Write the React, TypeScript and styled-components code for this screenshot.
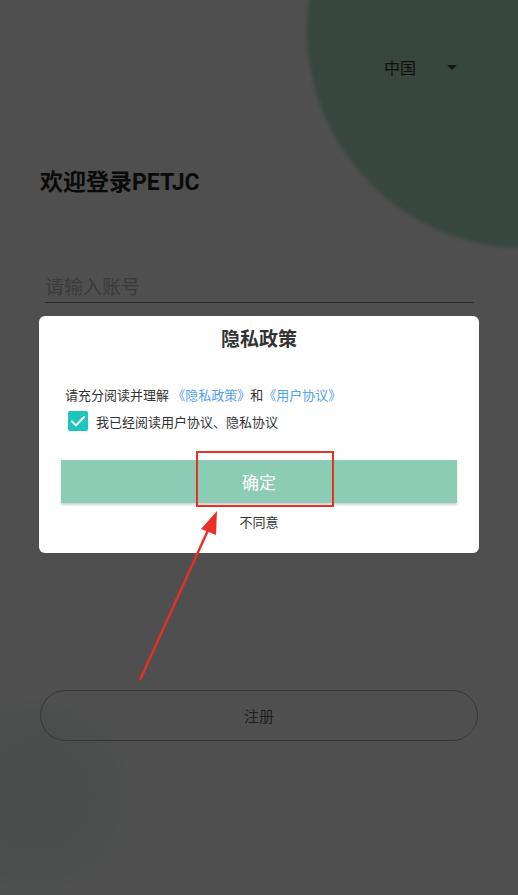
import * as React from "react";
import styled, { createGlobalStyle } from "styled-components";

const GlobalStyle = createGlobalStyle`
    html, body {
        margin: 0;
        padding: 0;
        background: #ffffff;
    }
    body {
        font-family: Roboto, "Noto Sans CJK SC", sans-serif;
    }
`;

const Screen = styled.div`
    position: relative;
    width: 518px;
    height: 895px;
    overflow: hidden;
    background: #ffffff;
`;

const TopBlob = styled.div`
    position: absolute;
    left: 307px;
    top: -188px;
    width: 436px;
    height: 436px;
    border-radius: 50%;
    background: #b1e2cb;
    filter: blur(2px);
`;

const BottomBlob = styled.div`
    position: absolute;
    left: -70px;
    top: 690px;
    width: 210px;
    height: 210px;
    border-radius: 50%;
    background: radial-gradient(circle, rgba(200, 235, 222, 0.35) 0%, rgba(200, 235, 222, 0.25) 50%, rgba(255, 255, 255, 0) 72%);
`;

const Content = styled.div`
    position: relative;
    display: flex;
    flex-direction: column;
    padding: 0 40px;
`;

const TopBar = styled.div`
    display: flex;
    justify-content: flex-end;
    padding: 53px 21px 0 0;
`;

const CountrySelect = styled.div`
    display: flex;
    align-items: center;
    gap: 31px;
    height: 28px;
    font-size: 16px;
    color: #333;
    font-family: "Noto Sans CJK SC", sans-serif;
`;

const Caret = styled.span`
    width: 0;
    height: 0;
    border-left: 5px solid transparent;
    border-right: 5px solid transparent;
    border-top: 5px solid #444;
`;

const Title = styled.h1`
    margin: 87px 0 0 0;
    font-size: 23px;
    line-height: 30px;
    font-weight: 700;
    color: #222;
`;

const AccountInput = styled.div`
    margin: 70px 4px 0 5px;
    height: 34px;
    display: flex;
    align-items: center;
    border-bottom: 1px solid #888;
    font-size: 19px;
    color: #bbbbbb;
    font-family: "Noto Sans CJK SC", sans-serif;
`;

const RegisterButton = styled.div`
    margin-top: 387px;
    height: 49px;
    border: 1px solid #aaaaaa;
    border-radius: 26px;
    display: flex;
    align-items: center;
    justify-content: center;
    font-size: 15px;
    color: #666;
`;

const Overlay = styled.div`
    position: absolute;
    inset: 0;
    background: rgba(0, 0, 0, 0.69);
    display: flex;
    justify-content: center;
    align-items: flex-start;
    padding-top: 316px;
`;

const Dialog = styled.div`
    position: relative;
    width: 440px;
    height: 237px;
    box-sizing: border-box;
    background: #ffffff;
    border-radius: 6px;
    display: flex;
    flex-direction: column;
    padding: 11px 22px 0 22px;
`;

const DialogTitle = styled.div`
    text-align: center;
    font-size: 19px;
    line-height: 26px;
    font-weight: 700;
    color: #333;
`;

const Body = styled.div`
    margin-top: 34px;
    padding-left: 4px;
    font-size: 13px;
    line-height: 18px;
    color: #333;
`;

const Link = styled.span`
    color: #52a2ea;
`;

const CheckRow = styled.div`
    display: flex;
    align-items: center;
    gap: 8px;
    margin: 6px 0 0 7px;
    font-size: 13px;
    color: #333;
`;

const CheckBox = styled.span`
    width: 20px;
    height: 20px;
    border-radius: 2px;
    background: #1ec5bd;
    display: flex;
    align-items: center;
    justify-content: center;
`;

const ConfirmButton = styled.div`
    margin-top: 29px;
    height: 43px;
    background: #8ccbb4;
    box-shadow: 0 2px 2px rgba(0, 0, 0, 0.18);
    display: flex;
    align-items: center;
    justify-content: center;
    font-size: 17px;
    color: #ffffff;
`;

const Decline = styled.div`
    margin-top: 11px;
    text-align: center;
    font-size: 13px;
    line-height: 18px;
    color: #333;
`;

const Highlight = styled.div`
    position: absolute;
    left: 157px;
    top: 135px;
    width: 134px;
    height: 52px;
    border: 2px solid #ea2f26;
`;

const Annotation = styled.svg`
    position: absolute;
    left: 0;
    top: 0;
    pointer-events: none;
`;

export default function App() {
    return <>
        <GlobalStyle/>
        <Screen>
            <TopBlob/>
            <BottomBlob/>
            <Content>
                <TopBar>
                    <CountrySelect>
                        <span>中国</span>
                        <Caret/>
                    </CountrySelect>
                </TopBar>
                <Title>欢迎登录PETJC</Title>
                <AccountInput>请输入账号</AccountInput>
                <RegisterButton>注册</RegisterButton>
            </Content>
            <Overlay>
                <Dialog>
                    <DialogTitle>隐私政策</DialogTitle>
                    <Body>
                        请充分阅读并理解 <Link>《隐私政策》</Link>和<Link>《用户协议》</Link>
                    </Body>
                    <CheckRow>
                        <CheckBox>
                            <svg width="16" height="16" viewBox="0 0 24 24" fill="none" stroke="#fff" strokeWidth="3" strokeLinecap="round" strokeLinejoin="round">
                                <path d="M3 12.5l6 6L21 6"/>
                            </svg>
                        </CheckBox>
                        <span>我已经阅读用户协议、隐私协议</span>
                    </CheckRow>
                    <ConfirmButton>确定</ConfirmButton>
                    <Decline>不同意</Decline>
                    <Highlight/>
                </Dialog>
            </Overlay>
            <Annotation width="518" height="895" viewBox="0 0 518 895">
                <line x1="140" y1="680" x2="209" y2="528" stroke="#ea2f26" strokeWidth="2.4"/>
                <polygon points="217,511 201,529 216,535" fill="#ea2f26"/>
            </Annotation>
        </Screen>
    </>;
}
